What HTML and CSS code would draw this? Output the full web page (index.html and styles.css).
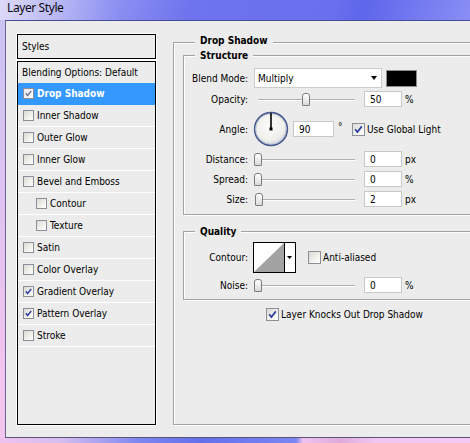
FILE: index.html
```html
<!DOCTYPE html>
<html>
	<head>
		<meta charset="utf-8" />
		<link rel="stylesheet" href="styles.css">
	</head>
	<body>
		<div class="titlebar">Layer Style</div>
		<div class="dialog">
			<div class="styles-panel">
				<div class="styles-head">Styles</div>
				<ul class="style-list">
					<li class="style-item plain">Blending Options: Default</li>
					<li class="style-item selected">
						<span class="check small on"><svg viewBox="0 0 11 11"><path d="M2.2 5.2 4.4 8 8.8 2.4" /></svg></span>Drop Shadow
					</li>
					<li class="style-item"><span class="check small"></span>Inner Shadow</li>
					<li class="style-item"><span class="check small"></span>Outer Glow</li>
					<li class="style-item"><span class="check small"></span>Inner Glow</li>
					<li class="style-item"><span class="check small"></span>Bevel and Emboss</li>
					<li class="style-item sub"><span class="check small"></span>Contour</li>
					<li class="style-item sub"><span class="check small"></span>Texture</li>
					<li class="style-item"><span class="check small"></span>Satin</li>
					<li class="style-item"><span class="check small"></span>Color Overlay</li>
					<li class="style-item">
						<span class="check small on"><svg viewBox="0 0 11 11"><path d="M2.2 5.2 4.4 8 8.8 2.4" /></svg></span>Gradient Overlay
					</li>
					<li class="style-item">
						<span class="check small on"><svg viewBox="0 0 11 11"><path d="M2.2 5.2 4.4 8 8.8 2.4" /></svg></span>Pattern Overlay
					</li>
					<li class="style-item"><span class="check small"></span>Stroke</li>
				</ul>
			</div>

			<div class="group outer">
				<div class="group-title">Drop Shadow</div>

				<div class="group inner structure">
					<div class="group-title">Structure</div>
					<div class="rows">
						<div class="row blend">
							<span class="field-label">Blend Mode:</span>
							<div class="select"><span>Multiply</span><span class="arrow"></span></div>
							<span class="swatch"></span>
						</div>
						<div class="row">
							<span class="field-label">Opacity:</span>
							<div class="slider"><span class="track"></span><span class="thumb" style="left: 48px"></span></div>
							<input class="num" type="text" value="50" />
							<span class="unit">%</span>
						</div>
						<div class="row angle">
							<span class="field-label">Angle:</span>
							<svg class="dial" width="36" height="36" viewBox="0 0 36 36">
								<defs>
									<radialGradient id="dialFill" cx="0.45" cy="0.4" r="0.6">
										<stop offset="0" stop-color="#fbfbfa" />
										<stop offset="0.75" stop-color="#efefec" />
										<stop offset="1" stop-color="#cfd2d8" />
									</radialGradient>
								</defs>
								<circle cx="18" cy="18" r="16.4" fill="url(#dialFill)" stroke="#475a8e" stroke-width="1.6" />
								<circle cx="18" cy="18" r="15.2" fill="none" stroke="#b9c2d6" stroke-width="0.8" />
								<line x1="18" y1="18" x2="18" y2="1.8" stroke="#000" stroke-width="1.6" />
								<rect x="16.5" y="16.5" width="3" height="3" fill="#000" />
							</svg>
							<input class="num wide" type="text" value="90" />
							<span class="deg">°</span>
							<span class="check on"><svg viewBox="0 0 11 11"><path d="M2.2 5.2 4.4 8 8.8 2.4" /></svg></span>
							<span class="check-text">Use Global Light</span>
						</div>
						<div class="row">
							<span class="field-label">Distance:</span>
							<div class="slider"><span class="track"></span><span class="thumb" style="left: 0px"></span></div>
							<input class="num" type="text" value="0" />
							<span class="unit">px</span>
						</div>
						<div class="row">
							<span class="field-label">Spread:</span>
							<div class="slider"><span class="track"></span><span class="thumb" style="left: 0px"></span></div>
							<input class="num" type="text" value="0" />
							<span class="unit">%</span>
						</div>
						<div class="row">
							<span class="field-label">Size:</span>
							<div class="slider"><span class="track"></span><span class="thumb" style="left: 1px"></span></div>
							<input class="num" type="text" value="2" />
							<span class="unit">px</span>
						</div>
					</div>
				</div>

				<div class="group inner quality">
					<div class="group-title">Quality</div>
					<div class="rows">
						<div class="row contour">
							<span class="field-label">Contour:</span>
							<svg class="curve" width="43" height="31" viewBox="0 0 43 31">
								<rect x="0.5" y="0.5" width="42" height="30" fill="#fff" stroke="#000" />
								<polygon points="1,30 31,1 31,30" fill="#a3a3a3" />
								<line x1="31.5" y1="0" x2="31.5" y2="31" stroke="#000" />
								<polygon points="34,14 39,14 36.5,17" fill="#000" />
							</svg>
							<span class="check aa"></span>
							<span class="check-text">Anti-aliased</span>
						</div>
						<div class="row">
							<span class="field-label">Noise:</span>
							<div class="slider"><span class="track"></span><span class="thumb" style="left: 0px"></span></div>
							<input class="num" type="text" value="0" />
							<span class="unit">%</span>
						</div>
					</div>
				</div>

				<div class="row knock">
					<span class="check on"><svg viewBox="0 0 11 11"><path d="M2.2 5.2 4.4 8 8.8 2.4" /></svg></span>
					<span class="check-text">Layer Knocks Out Drop Shadow</span>
				</div>
			</div>
		</div>
		<div class="frame-bottom"></div>
	</body>
</html>
```

FILE: styles.css
```css
html {
	height: 100%;
}
body {
	margin: 0;
	height: 100%;
	overflow: hidden;
	background: linear-gradient(
		to bottom,
		rgb(200, 196, 243) 0,
		rgb(218, 194, 242) 160px,
		rgb(238, 195, 239) 330px,
		rgb(243, 198, 238) 443px
	);
	font-family: 'DejaVu Sans Condensed', 'Liberation Sans', sans-serif;
	font-size: 10px;
	color: black;
}

/* window caption */
.titlebar {
	height: 20px;
	box-sizing: border-box;
	padding-left: 7px;
	font-family: 'Noto Sans', sans-serif;
	font-size: 12px;
	line-height: 15px;
	letter-spacing: -0.4px;
	color: rgb(10, 10, 20);
	background: linear-gradient(
		100deg,
		rgb(222, 218, 248) 0,
		rgb(190, 189, 245) 50px,
		rgb(138, 142, 241) 120px,
		rgb(110, 115, 238) 190px,
		rgb(105, 112, 238) 330px,
		rgb(94, 102, 235) 360px,
		rgb(110, 117, 239) 400px,
		rgb(138, 144, 244) 470px
	);
}

.dialog {
	display: flex;
	align-items: flex-start;
	margin-left: 5px;
	height: 418px;
	box-sizing: border-box;
	padding: 13px 0 0 11px;
	background-color: rgb(236, 236, 236);
	border-top: 1px solid rgb(72, 74, 150);
	border-left: 1px solid rgb(108, 98, 144);
	border-bottom: 1px solid rgb(92, 84, 120);
	overflow: hidden;
}

.frame-bottom {
	height: 6px;
	background: linear-gradient(
		90deg,
		rgb(238, 194, 238) 0,
		rgb(214, 190, 240) 60px,
		rgb(124, 134, 240) 140px,
		rgb(100, 112, 234) 200px,
		rgb(122, 134, 242) 296px,
		rgb(239, 195, 239) 303px,
		rgb(222, 170, 218) 340px,
		rgb(241, 198, 240) 375px,
		rgb(244, 202, 242) 470px
	);
}

/* left list */
.styles-panel {
	flex-shrink: 0;
	width: 139px;
}
.styles-head {
	height: 25px;
	box-sizing: border-box;
	display: flex;
	align-items: center;
	padding-left: 4px;
	border: 1px solid black;
	box-shadow: 0 0 0 1px white;
}
.style-list {
	list-style: none;
	margin: 2px 0 0 0;
	padding: 0;
	height: 364px;
	box-sizing: border-box;
	border: 1px solid black;
	box-shadow: 0 0 0 1px white;
}
.style-item {
	display: flex;
	align-items: center;
	gap: 3px;
	height: 21px;
	padding-left: 5px;
	border-bottom: 1px solid white;
}
.style-item.plain {
	padding-left: 4px;
	border-bottom: none;
}
.style-item.sub {
	padding-left: 18px;
}
.style-item.selected {
	background-color: rgb(51, 153, 255);
	border-bottom-color: rgb(51, 153, 255);
	color: white;
	font-weight: bold;
}

/* checkboxes */
.check {
	flex-shrink: 0;
	display: flex;
	align-items: center;
	justify-content: center;
	width: 13px;
	height: 13px;
	box-sizing: border-box;
	border: 1px solid rgb(142, 143, 150);
	background: linear-gradient(135deg, rgb(218, 218, 212) 0%, rgb(242, 242, 238) 60%, white 100%);
}
.check.small {
	width: 11px;
	height: 11px;
}
.check svg {
	width: 11px;
	height: 11px;
}
.check.small svg {
	width: 9px;
	height: 9px;
}
.check path {
	fill: none;
	stroke: rgb(44, 62, 160);
	stroke-width: 1.7;
}
.selected .check {
	background: linear-gradient(135deg, rgb(232, 232, 232), white);
}
.selected .check path {
	stroke: rgb(110, 120, 150);
}

/* group boxes */
.group {
	border: 1px solid rgb(162, 162, 162);
	box-shadow: inset 1px 1px 0 white, 1px 1px 0 white;
}
.group-title {
	width: max-content;
	margin: -7px 0 0 11px;
	padding: 0 5px;
	background-color: rgb(236, 236, 236);
	font-weight: bold;
	line-height: 13px;
}
.group.outer {
	flex-shrink: 0;
	width: 330px;
	height: 383px;
	box-sizing: border-box;
	margin: 8px 0 0 17px;
	padding-left: 9px;
}
.group.outer > .group-title {
	margin-top: -9px;
	margin-left: 12px;
}
.group.structure {
	margin-top: 8px;
	padding-bottom: 6px;
}
.group.quality {
	margin-top: 16px;
	padding-bottom: 5px;
}
.structure .rows {
	margin-top: 6px;
	display: flex;
	flex-direction: column;
	gap: 2px;
}
.quality .rows {
	margin-top: 4px;
	display: flex;
	flex-direction: column;
	gap: 4px;
}

/* form rows */
.row {
	display: flex;
	align-items: center;
	height: 18px;
}
.row.blend {
	height: 20px;
}
.row.angle {
	height: 38px;
}
.row.contour {
	height: 30px;
}
.row.knock {
	height: 14px;
	margin: 7px 0 0 83px;
}
.field-label {
	flex-shrink: 0;
	width: 64px;
	text-align: right;
	white-space: nowrap;
}
.select {
	display: flex;
	align-items: center;
	justify-content: space-between;
	margin-left: 6px;
	width: 128px;
	height: 20px;
	box-sizing: border-box;
	padding: 0 4px 0 3px;
	background-color: white;
	border: 1px solid rgb(204, 204, 204);
}
.arrow {
	border-left: 3.5px solid transparent;
	border-right: 3.5px solid transparent;
	border-top: 4px solid black;
}
.swatch {
	margin-left: 4px;
	width: 31px;
	height: 17px;
	box-sizing: border-box;
	background-color: black;
	border: 1px solid rgb(140, 140, 140);
}
.slider {
	position: relative;
	flex-shrink: 0;
	margin-left: 6px;
	width: 102px;
	height: 18px;
}
.track {
	position: absolute;
	left: 4px;
	right: 1px;
	top: 9px;
	height: 0;
	border-top: 1px solid rgb(176, 176, 176);
	border-bottom: 1px solid white;
}
.thumb {
	position: absolute;
	top: 3px;
	width: 8px;
	height: 13px;
	box-sizing: border-box;
	border: 1px solid rgb(124, 124, 124);
	border-radius: 3px 3px 1px 1px;
	background: linear-gradient(to bottom, white, rgb(218, 218, 218));
}
.num {
	flex-shrink: 0;
	margin: 0 0 0 8px;
	width: 38px;
	height: 16px;
	box-sizing: border-box;
	padding: 0 0 0 5px;
	border: 1px solid rgb(200, 200, 200);
	background-color: white;
	font: inherit;
	color: black;
	outline: none;
}
.num.wide {
	margin-left: 4px;
	width: 41px;
}
.unit {
	margin-left: 3px;
}
.dial {
	flex-shrink: 0;
	margin-left: 5px;
}
.deg {
	width: 10px;
	margin-left: 4px;
	align-self: flex-start;
	margin-top: 11px;
}
.row.angle .check {
	margin-left: 4px;
}
.check-text {
	margin-left: 2px;
	white-space: nowrap;
}
.curve {
	flex-shrink: 0;
	margin-left: 5px;
}
.check.aa {
	margin-left: 12px;
}
```
